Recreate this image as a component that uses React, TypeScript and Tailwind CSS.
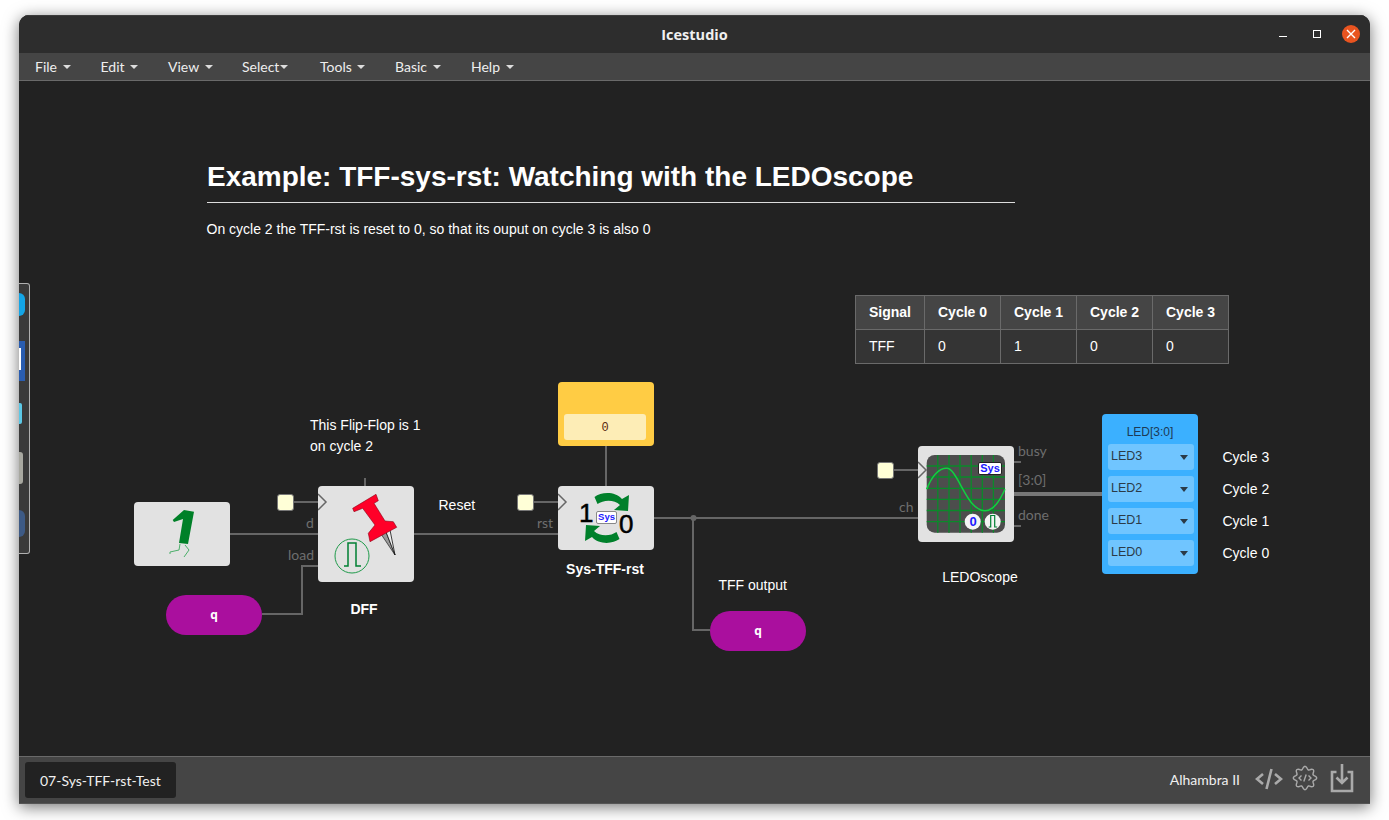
import React from "react";

const Caret = ({ c = "border-t-[#dddddd]", h = "border-t-[4px]" }: { c?: string; h?: string }) => (
  <span className={`inline-block w-0 h-0 border-l-[4px] border-r-[4px] border-l-transparent border-r-transparent ${h} ${c}`} />
);

const menu: [string, string, string][] = [
  ["File", "w-[65.5px]", "ml-[6px]"],
  ["Edit", "w-[67.5px]", "ml-[5px]"],
  ["View", "w-[74px]", "ml-[6px]"],
  ["Select", "w-[78px]", "ml-[1px]"],
  ["Tools", "w-[75px]", "ml-[5px]"],
  ["Basic", "w-[76px]", "ml-[6px]"],
  ["Help", "w-[60px]", "ml-[6px]"],
];

const Clock = ({ className }: { className: string }) => (
  <div className={`absolute w-[17px] h-[17px] rounded-[3px] bg-[#ffffd7] border border-[#777777] ${className}`} />
);

const PulseMark = ({ cx, cy, s = 1, w = 1.4 }: { cx: number; cy: number; s?: number; w?: number }) => (
  <path
    d={`M${cx - 8 * s} ${cy + 10 * s}H${cx - 4 * s}V${cy - 13 * s}H${cx + 4 * s}V${cy + 10 * s}H${cx + 9 * s}`}
    fill="none"
    stroke="#008033"
    strokeWidth={w}
  />
);

const Label = ({ className, children }: { className: string; children: React.ReactNode }) => (
  <span className={`absolute text-[14px] leading-[18px] text-[#6e6e6e] font-['Lato',sans-serif] ${className}`}>{children}</span>
);

const Text = ({ className, children }: { className: string; children: React.ReactNode }) => (
  <div className={`absolute text-[14px] leading-[21px] text-white whitespace-nowrap ${className}`}>{children}</div>
);

const gearPath = (() => {
  const pts: string[] = [];
  for (let i = 0; i <= 96; i++) {
    const t = (i / 96) * Math.PI * 2;
    const r = 10.2 + 1.5 * Math.cos(8 * t);
    pts.push(`${(13 + r * Math.sin(t)).toFixed(2)} ${(13 - r * Math.cos(t)).toFixed(2)}`);
  }
  return "M" + pts.join("L") + "Z";
})();

const leds = ["LED3", "LED2", "LED1", "LED0"];
const cycles = ["Cycle 3", "Cycle 2", "Cycle 1", "Cycle 0"];
const heads = ["Signal", "Cycle 0", "Cycle 1", "Cycle 2", "Cycle 3"];
const row = ["TFF", "0", "1", "0", "0"];
const gridX = [937.8, 949, 960, 971.2, 982.3, 993.4];
const gridY = [466, 477, 488.3, 499.4, 510.5, 521.6];

export default function App() {
  return (
    <div className="w-[1389px] h-[820px] bg-white pt-[15px] pl-[19px] overflow-hidden">
      <div className="w-[1351px] h-[789px] flex flex-col rounded-t-[10px] overflow-hidden shadow-[0_3px_16px_rgba(0,0,0,0.55)] bg-[#222222] font-['Liberation_Sans',sans-serif]">
        {/* title bar */}
        <div className="h-[38px] shrink-0 bg-[#2d2d2d] border-t border-[#3c3c3c] flex items-center justify-center relative">
          <span className="text-[14.5px] font-bold text-[#f0f0f0] font-['Open_Sans',sans-serif]">Icestudio</span>
          <div className="absolute right-[10px] top-[9px] flex items-center">
            <div className="w-[8px] h-[1px] bg-white mr-[26px] mt-[4px]" />
            <div className="w-[8px] h-[8px] border border-white mr-[21px]" />
            <div className="w-[18px] h-[18px] rounded-full bg-[#e95420] flex items-center justify-center">
              <svg width="10" height="10" viewBox="0 0 10 10"><path d="M1 1L9 9M9 1L1 9" stroke="#fff" strokeWidth="1.4" /></svg>
            </div>
          </div>
        </div>
        {/* menu */}
        <div className="h-[28px] shrink-0 bg-[#454545] border-b border-[#6a6a6a] flex items-center pl-[16px] text-[14px] text-[#eeeeee] font-['Lato',sans-serif]">
          {menu.map(([m, w, ml]) => (
            <div key={m} className={`${w} flex items-center`}>
              <span>{m}</span>
              <span className={`${ml} flex`}><Caret /></span>
            </div>
          ))}
        </div>
        {/* canvas */}
        <div className="relative flex-1 bg-[#222222] overflow-hidden">
          <svg className="absolute left-0 top-0" width="1351" height="675" viewBox="19 81 1351 675">
            <g stroke="#666666" strokeWidth="2" fill="none">
              <path d="M230 534H318M262 614H302V566H318M414 534H558M294 502H318M534 502H558M606 446V486M365 478V486M654 518H918M693 518V630H710M894 470H918M1014 462H1021M1014 526H1021" />
              <path d="M1014 494H1102" strokeWidth="4" stroke="#777777" />
            </g>
            <circle cx="693.5" cy="518" r="3" fill="#666666" />
          </svg>

          {/* markdown */}
          <h1 className="absolute left-[188px] top-[78px] w-[808px] h-[44px] border-b border-[#dddddd] text-[28px] leading-[36px] tracking-[-0.01px] font-bold text-white whitespace-nowrap">
            Example: TFF-sys-rst: Watching with the LEDOscope
          </h1>
          <Text className="left-[187.5px] top-[138px]">On cycle 2 the TFF-rst is reset to 0, so that its ouput on cycle 3 is also 0</Text>

          {/* table */}
          <table className="absolute left-[836px] top-[214px] border-collapse table-fixed w-[374px] text-[14px] text-white whitespace-nowrap">
            <colgroup>
              <col className="w-[69px]" />
              <col className="w-[76px]" />
              <col className="w-[76px]" />
              <col className="w-[76px]" />
              <col className="w-[76px]" />
            </colgroup>
            <tbody>
              <tr className="h-[34px] bg-[#454545]">
                {heads.map((h) => (
                  <th key={h} className="border border-[#6a6a6a] px-[13px] text-left font-bold">{h}</th>
                ))}
              </tr>
              <tr className="h-[34px] bg-[#343434]">
                {row.map((c, i) => (
                  <td key={i} className="border border-[#6a6a6a] px-[13px]">{c}</td>
                ))}
              </tr>
            </tbody>
          </table>

          {/* constant 1 block */}
          <div className="absolute left-[115px] top-[421px] w-[96px] h-[64px] rounded-[4px] bg-[#e2e2e2]">
            <svg width="96" height="64" viewBox="134 502 96 64">
              <path d="M172.7 520L184 510L194 511.7L188 544L179 543L183 519L174 522Z" fill="#008028" />
              <path d="M180 544L179 550L170 552V554M185 545L189 550L184 557" stroke="#4caf6a" strokeWidth="1" fill="none" />
            </svg>
          </div>

          {/* DFF */}
          <Clock className="left-[258px] top-[413px]" />
          <div className="absolute left-[299px] top-[405px] w-[96px] h-[96px] rounded-[4px] bg-[#e2e2e2]">
            <svg width="96" height="96" viewBox="318 486 96 96">
              <path d="M318 494L326 502L318 510" fill="none" stroke="#666666" strokeWidth="1.5" />
              <circle cx="352" cy="556" r="17" fill="none" stroke="#1f9a4a" strokeWidth="1" />
              <PulseMark cx={352} cy={556} s={1} w={1.5} />
              <path d="M381 534L386 532L395 555Z" fill="#9a9a9a" stroke="#333" strokeWidth="0.8" />
              <path d="M386 532L390 530L395 555Z" fill="#eeeeee" stroke="#111" strokeWidth="0.8" />
              <path d="M352.7 508.3L376 494.3L378.3 500.7L374 503.3L385 521L393.3 521.7L396.7 527.3L370 541.7L368.3 533.3L375 525L362.7 508.3L354 511.7Z" fill="#ff0028" stroke="#8a0014" strokeWidth="0.6" />
            </svg>
          </div>
          <Text className="left-[291px] top-[334px]">This Flip-Flop is 1<br />on cycle 2</Text>
          <Text className="left-[419.5px] top-[414px]">Reset</Text>
          <Text className="left-[297px] top-[518px] w-[96px] text-center font-bold">DFF</Text>
          <Label className="left-[287px] top-[433px]">d</Label>
          <Label className="left-[269px] top-[465px]">load</Label>

          {/* q in */}
          <div className="absolute left-[147px] top-[514px] w-[96px] h-[40px] rounded-[20px] bg-[#aa0f9e] flex items-center justify-center text-[12px] font-bold text-white font-['Noto_Sans',sans-serif]">q</div>
          {/* q out */}
          <div className="absolute left-[691px] top-[530px] w-[96px] h-[40px] rounded-[20px] bg-[#aa0f9e] flex items-center justify-center text-[12px] font-bold text-white font-['Noto_Sans',sans-serif]">q</div>

          {/* yellow const */}
          <div className="absolute left-[539px] top-[301px] w-[96px] h-[64px] rounded-[4px] bg-[#ffcc44] pt-[32px] pl-[6px] pr-[8px]">
            <div className="h-[26px] rounded-[3px] bg-[#fdedb6] flex items-center justify-center font-['Liberation_Mono',monospace] text-[12px] pt-[2px] text-[#5a2a10]">0</div>
          </div>

          {/* Sys TFF */}
          <Clock className="left-[498px] top-[413px]" />
          <div className="absolute left-[539px] top-[405px] w-[96px] h-[64px] rounded-[4px] bg-[#e2e2e2]">
            <svg width="96" height="64" viewBox="558 486 96 64">
              <path d="M558 494L566 502L558 510" fill="none" stroke="#666666" strokeWidth="1.5" />
              <g fill="#00802b">
                <path d="M594.5 497C601 492 615 491 622 499L629 495L628 511L614 510L620 505C614 499 603 500 597.5 504Z" />
                <path d="M619.5 539C613 544 599 545 592 537L585 541L586 525L600 526L594 531C600 537 611 536 616.5 532Z" />
              </g>
            </svg>
            <span className="absolute left-[21px] top-[12px] text-[26px] leading-[30px] text-black [-webkit-text-stroke:0.5px_black]">1</span>
            <span className="absolute left-[61px] top-[23px] text-[26px] leading-[30px] text-black [-webkit-text-stroke:0.5px_black]">0</span>
            <span className="absolute left-[38px] top-[25px] w-[21px] h-[13px] bg-white border border-[#888888] rounded-[2px] flex items-center justify-center text-[9.5px] font-bold text-[#1a1aff]">Sys</span>
          </div>
          <Text className="left-[539px] top-[478px] w-[94px] text-center font-bold">Sys-TFF-rst</Text>
          <Label className="left-[518px] top-[433px]">rst</Label>
          <Text className="left-[699.5px] top-[494px]">TFF output</Text>

          {/* LEDOscope */}
          <Clock className="left-[858px] top-[381px]" />
          <div className="absolute left-[899px] top-[365px] w-[96px] h-[96px] rounded-[4px] bg-[#e2e2e2]">
            <svg width="96" height="96" viewBox="918 446 96 96">
              <path d="M918 462L926 470L918 478" fill="none" stroke="#666666" strokeWidth="1.5" />
              <rect x="926.7" y="455" width="78.3" height="77.7" rx="8" fill="#4d4d4d" />
              <g stroke="#0a8a2a" strokeWidth="1.3">
                {gridX.map((x) => <path key={x} d={`M${x} 455V532.7`} />)}
                {gridY.map((y) => <path key={y} d={`M926.7 ${y}H1005`} />)}
              </g>
              <path d="M926.7 489.3C932 476 939 468.3 946.7 468.3C958 468.3 966 510.7 985 510.7C994 510.7 1000 500 1005 489.3" fill="none" stroke="#10d040" strokeWidth="1.5" />
              <circle cx="972.7" cy="521.7" r="8" fill="#f4f4f4" />
              <circle cx="992.7" cy="521.7" r="8" fill="#f4f4f4" />
              <PulseMark cx={992.7} cy={522} s={0.5} w={1.2} />
            </svg>
            <span className="absolute left-[60px] top-[16px] w-[24px] h-[13px] bg-white border border-[#222222] rounded-[2px] flex items-center justify-center text-[11px] font-bold text-[#1a1aff]">Sys</span>
            <span className="absolute left-[47px] top-[67px] w-[16px] h-[17px] flex items-center justify-center text-[13px] font-bold text-[#1a1aff]">0</span>
          </div>
          <Text className="left-[899px] top-[486px] w-[124px] text-center">LEDOscope</Text>
          <Label className="left-[880px] top-[417px]">ch</Label>
          <Label className="left-[999px] top-[361px]">busy</Label>
          <Label className="left-[999px] top-[390px]">[3:0]</Label>
          <Label className="left-[999px] top-[425px]">done</Label>

          {/* LED block */}
          <div className="absolute left-[1083px] top-[333px] w-[96px] h-[160px] rounded-[4px] bg-[#3bb0ff] pl-[6px] pr-[4px] pt-[5px] flex flex-col">
            <div className="h-[25px] flex items-center justify-center pr-[2px] text-[12px] text-[#1d3a55]">LED[3:0]</div>
            <div className="flex flex-col gap-[6px]">
              {leds.map((l) => (
                <div key={l} className="h-[26px] rounded-[3px] bg-[#70c5ff] flex items-start justify-between pl-[3px] pr-[6px]">
                  <span className="text-[12.5px] leading-[24px] text-[#2b3b48]">{l}</span>
                  <span className="mt-[11px] flex"><Caret c="border-t-[#2b3b48]" h="border-t-[5px]" /></span>
                </div>
              ))}
            </div>
          </div>
          <div className="absolute left-[1203.5px] top-[366px] flex flex-col gap-[11px]">
            {cycles.map((c) => (
              <div key={c} className="text-[14px] leading-[21px] text-white whitespace-nowrap">{c}</div>
            ))}
          </div>

          {/* dock remnant */}
          <div className="absolute left-0 top-[202px] w-[11px] h-[271px] bg-[#3a3a3a] border border-l-0 border-[#b0b0b0] rounded-r-[3px]">
            <div className="absolute left-0 top-[9px] w-[6px] h-[23px] rounded-r-[6px] bg-[#14a5e6]" />
            <div className="absolute left-0 top-[57px] w-[6px] h-[40px] bg-[#2a5db0]" />
            <div className="absolute left-0 top-[64px] w-[2px] h-[22px] bg-white" />
            <div className="absolute left-0 top-[119px] w-[3px] h-[21px] rounded-r-[2px] bg-[#5cc8e6]" />
            <div className="absolute left-0 top-[168px] w-[4px] h-[32px] rounded-r-[3px] bg-[#a8a8a0]" />
            <div className="absolute left-0 top-[226px] w-[6px] h-[27px] rounded-r-[12px] bg-[#3d5a85]" />
          </div>
        </div>
        {/* footer */}
        <div className="h-[48px] shrink-0 bg-[#454545] border-t border-[#6a6a6a] border-b border-b-[#555555] flex items-start justify-between pl-[6px] pr-[16px] pt-[5px] font-['Lato',sans-serif]">
          <div className="w-[151px] h-[36px] rounded-[3px] bg-[#222222] flex items-center pl-[15px] text-[14px] text-[#f0f0f0]">07-Sys-TFF-rst-Test</div>
          <div className="flex items-center h-[36px]">
            <span className="text-[14px] text-[#f0f0f0] mr-[15px] relative top-[-1px]">Alhambra II</span>
            <svg width="28" height="24" viewBox="0 0 28 24" className="mr-[9px] relative top-[-1px]" fill="none" stroke="#aaaaaa" strokeWidth="2.6">
              <path d="M8 7L2 12L8 17M20 7L26 12L20 17M16.5 2L11.5 22" />
            </svg>
            <svg width="26" height="26" viewBox="0 0 26 26" className="mr-[12px] relative top-[-2px]" fill="none" stroke="#aaaaaa" strokeWidth="1.4">
              <path d={gearPath} />
              <path d="M9.5 10.5L7 13L9.5 15.5M16.5 10.5L19 13L16.5 15.5M14.2 9.5L11.8 16.5" />
            </svg>
            <svg width="24" height="30" viewBox="0 0 24 30" className="relative top-[-2px]" fill="none" stroke="#aaaaaa" strokeWidth="2.6">
              <path d="M6.5 9H2V28H22V9H17.5" />
              <path d="M12 1V20M6.5 14.5L12 20L17.5 14.5" />
            </svg>
          </div>
        </div>
      </div>
    </div>
  );
}
